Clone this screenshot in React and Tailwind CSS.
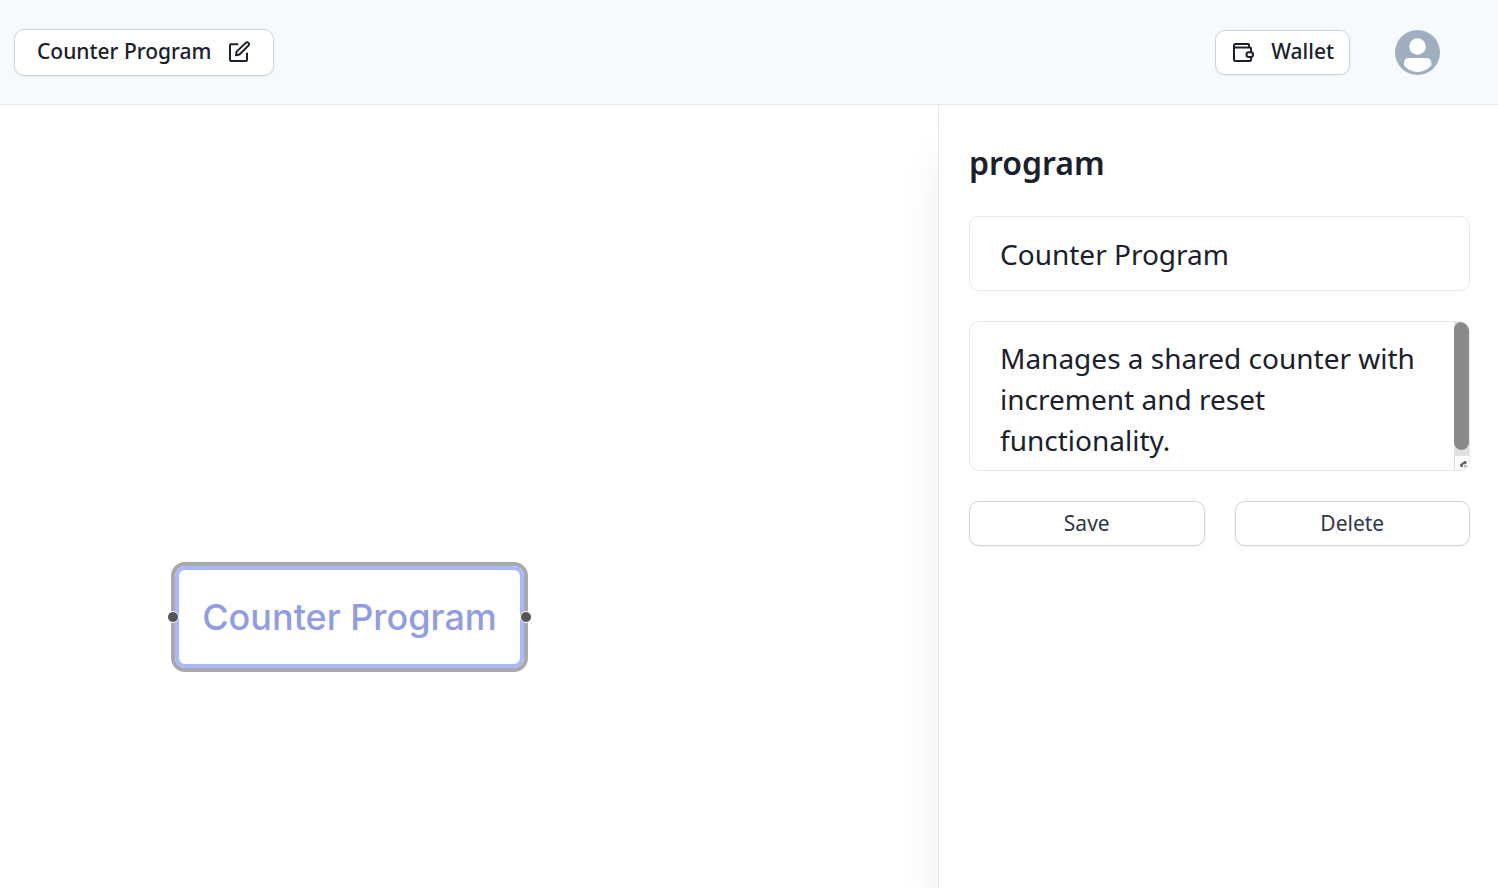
import React from "react";

const buttonBase =
  "flex items-center justify-center rounded-[10px] border border-[#cbd5e0] bg-white shadow-sm shadow-black/5";

function EditIcon() {
  return (
    <svg viewBox="0 0 24 24" className="size-6" fill="none" stroke="currentColor" strokeWidth="2" strokeLinecap="round" strokeLinejoin="round" aria-hidden="true">
      <path d="M10.500 4.200H4a1 1 0 0 0-1 1V20a1 1 0 0 0 1 1h15a1 1 0 0 0 1-1v-6.500" />
      <path d="M18.700 2.900a1.900 1.900 0 0 1 2.700 2.700L12.500 14.500 9 15.300l.600-3.700Z" />
    </svg>
  );
}

function WalletIcon() {
  return (
    <svg viewBox="0 0 24 24" className="size-6" fill="none" stroke="currentColor" strokeWidth="2" strokeLinecap="round" strokeLinejoin="round" aria-hidden="true">
      <path d="M18 7V5a1 1 0 0 0-1-1H4.500A1.500 1.500 0 0 0 3 5.500v14A1.500 1.500 0 0 0 4.500 21H19a1 1 0 0 0 1-1v-2.500" />
      <path d="M3 7.500h16a1 1 0 0 1 1 1V12" />
      <rect x="15.500" y="12.300" width="6.500" height="4.700" rx="2.200" />
    </svg>
  );
}

function Avatar() {
  return (
    <svg viewBox="0 0 45 45" className="size-[45px]" aria-hidden="true">
      <circle cx="22.500" cy="22.500" r="22.500" fill="#a0aec0" />
      <circle cx="22.500" cy="16.500" r="8.300" fill="#fff" />
      <path d="M14 28h17q5.300 0 5.300 5.300v2Q31 42 22.500 42T9 35.300v-2Q9 28 14 28Z" fill="#fff" />
    </svg>
  );
}

function Header() {
  return (
    <header className="flex h-[105px] shrink-0 items-center justify-between border-b border-[#e2e8f0] bg-[#f7fafc] pr-[58px] pl-3.5">
      <button type="button" className={`${buttonBase} h-[47px] gap-4 px-[22px] text-[21px] font-medium`}>
        Counter Program
        <EditIcon />
      </button>
      <div className="flex items-center gap-[45px]">
        <button type="button" className={`${buttonBase} h-[45px] gap-4 px-[15px] text-[21px] font-medium`}>
          <WalletIcon />
          Wallet
        </button>
        <button type="button" aria-label="Account">
          <Avatar />
        </button>
      </div>
    </header>
  );
}

function Canvas() {
  return (
    <main className="relative min-w-0 flex-1">
      <div className="absolute top-[457px] left-[171px] flex h-[110px] w-[357px] items-center justify-center rounded-[14px] border-4 border-[#a9a9a9]">
        <div className="flex size-full items-center justify-center rounded-[10px] border-4 border-[#a9b7ff] text-[36px] font-medium text-[#919de0] [font-family:Inter,sans-serif]">
          Counter Program
        </div>
        <span className="absolute top-1/2 -left-2 size-3 -translate-y-1/2 rounded-full border border-white bg-[#555]" />
        <span className="absolute top-1/2 -right-2 size-3 -translate-y-1/2 rounded-full border border-white bg-[#555]" />
      </div>
    </main>
  );
}

function Panel() {
  return (
    <aside className="flex w-[560px] shrink-0 flex-col border-l border-[#e2e8f0] bg-white pt-[35px] pr-7 pl-[30px] shadow-[0_47px_47px_-9px_rgba(0,0,0,0.1)]">
      <h2 className="text-[32px] leading-[46px] font-semibold">program</h2>
      <input
        aria-label="Name"
        defaultValue="Counter Program"
        className="mt-[30px] h-[75px] rounded-[10px] border border-[#e2e8f0] px-[30px] text-[28px]"
      />
      <div className="relative mt-[30px] h-[150px] overflow-hidden rounded-[10px] border border-[#e2e8f0]">
        <textarea
          aria-label="Description"
          defaultValue="Manages a shared counter with increment and reset functionality."
          className="block size-full resize-none overflow-hidden py-4 pr-11 pl-[30px] text-[28px] leading-[41px]"
        />
        <div className="absolute inset-y-0 right-0 flex w-[15px] flex-col bg-[#e0e0e0]" aria-hidden="true">
          <div className="h-32 rounded-full bg-[#8a8a8a]" />
          <div className="mt-1.5 flex-1 border-l border-[#d8d8d8] bg-white">
            <svg viewBox="0 0 14 14" className="size-3.5">
              <path d="M5 9.500V8.500L9.500 5h2v3L8 8.500V11H6Z" fill="#666" />
              <path d="M9 9h3v2.500H9Z" fill="#bbb" />
            </svg>
          </div>
        </div>
      </div>
      <div className="mt-[30px] grid grid-cols-2 gap-[30px] text-[21px] text-[#2d3748]">
        <button type="button" className={`${buttonBase} h-[45px]`}>Save</button>
        <button type="button" className={`${buttonBase} h-[45px]`}>Delete</button>
      </div>
    </aside>
  );
}

export default function App() {
  return (
    <div className="flex min-h-screen flex-col bg-white text-[#1a202c] [font-family:'Noto_Sans',sans-serif]">
      <Header />
      <div className="flex flex-1 overflow-hidden">
        <Canvas />
        <Panel />
      </div>
    </div>
  );
}
